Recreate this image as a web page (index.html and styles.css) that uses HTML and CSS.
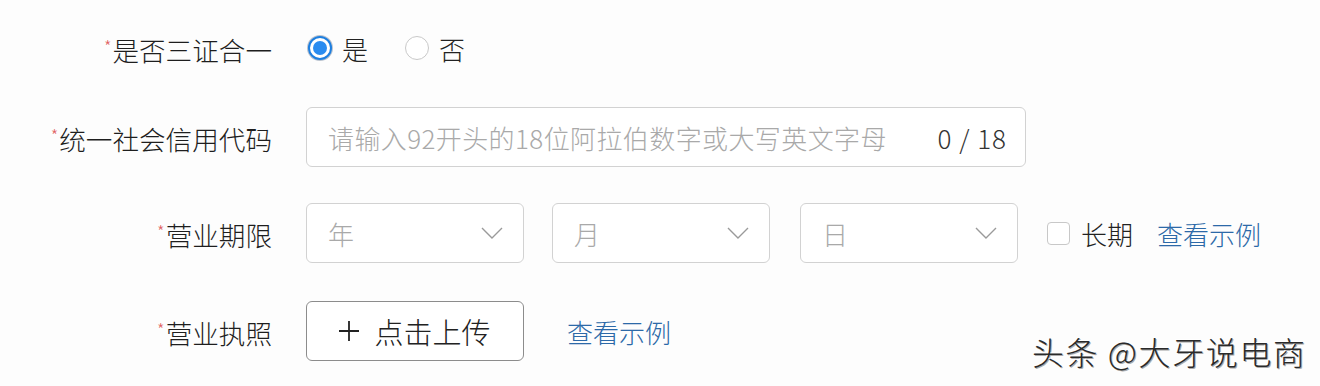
FILE: index.html
```html
<!DOCTYPE html>
<html lang="zh">
<head>
<meta charset="utf-8">
<title>表单</title>
<link rel="stylesheet" href="styles.css">
</head>
<body>
<div class="form">
  <div class="row row-radio">
    <div class="label"><span class="req">*</span>是否三证合一</div>
    <div class="ctrl">
      <label class="radio"><span class="dot checked"></span><span>是</span></label>
      <label class="radio"><span class="dot"></span><span>否</span></label>
    </div>
  </div>
  <div class="row r2">
    <div class="label"><span class="req">*</span>统一社会信用代码</div>
    <div class="ctrl">
      <div class="input">
        <span class="ph">请输入92开头的18位阿拉伯数字或大写英文字母</span>
        <span class="count">0 / 18</span>
      </div>
    </div>
  </div>
  <div class="row r3">
    <div class="label"><span class="req">*</span>营业期限</div>
    <div class="ctrl">
      <div class="select"><span class="ph">年</span><svg class="chev" viewBox="0 0 22 12" width="22" height="12"><path d="M1 1 L11 11 L21 1" fill="none" stroke="#9a9a9a" stroke-width="1.4"/></svg></div>
      <div class="select"><span class="ph">月</span><svg class="chev" viewBox="0 0 22 12" width="22" height="12"><path d="M1 1 L11 11 L21 1" fill="none" stroke="#9a9a9a" stroke-width="1.4"/></svg></div>
      <div class="select"><span class="ph">日</span><svg class="chev" viewBox="0 0 22 12" width="22" height="12"><path d="M1 1 L11 11 L21 1" fill="none" stroke="#9a9a9a" stroke-width="1.4"/></svg></div>
      <label class="check"><span class="box"></span><span>长期</span></label>
      <a class="link link-a">查看示例</a>
    </div>
  </div>
  <div class="row r4">
    <div class="label"><span class="req">*</span>营业执照</div>
    <div class="ctrl">
      <div class="btn"><svg class="plus" viewBox="0 0 20 20" width="20" height="20"><path d="M10 0 V20 M0 10 H20" fill="none" stroke="#222" stroke-width="1.8"/></svg><span>点击上传</span></div>
      <a class="link link-b">查看示例</a>
    </div>
  </div>
</div>
<div class="wm">头条 @大牙说电商</div>
</body>
</html>
```
FILE: styles.css
```css
html, body {
  margin: 0;
  padding: 0;
}
body {
  width: 1320px;
  height: 386px;
  background: #fdfdfd;
  font-family: "Noto Sans CJK SC", "Noto Sans", sans-serif;
  font-weight: 300;
  color: #222;
  position: relative;
  overflow: hidden;
}
.form {
  display: flex;
  flex-direction: column;
  padding-top: 28px;
}
.row {
  display: flex;
  align-items: center;
  height: 60px;
}
.row-radio {
  height: 40px;
}
.r2 { margin-top: 39px; }
.r3 { margin-top: 36px; }
.r4 { margin-top: 38px; }
.label {
  width: 272px;
  text-align: right;
  font-size: 26.6px;
  line-height: 40px;
  color: #1e1e1e;
  white-space: nowrap;
}
.req {
  color: #e06060;
  font-size: 17px;
  vertical-align: 8px;
  margin-right: 1px;
}
.ctrl {
  margin-left: 34px;
  display: flex;
  align-items: center;
  font-size: 26px;
}
.radio {
  display: flex;
  align-items: center;
  gap: 10px;
  margin-left: 2px;
  margin-right: 35px;
}
.dot {
  width: 24px;
  height: 24px;
  border: 1px solid #c9c9c9;
  border-radius: 50%;
  box-sizing: border-box;
  background: #fff;
  position: relative;
}
.dot.checked {
  border: 2px solid #1e7fe0;
  box-shadow: 0 0 0 1px rgba(30, 60, 100, 0.3);
}
.dot.checked::after {
  content: "";
  position: absolute;
  left: 3px;
  top: 3px;
  width: 14px;
  height: 14px;
  border-radius: 50%;
  background: #2a8cf0;
}
.input {
  width: 720px;
  height: 60px;
  box-sizing: border-box;
  border: 1px solid #d2d2d2;
  border-radius: 6px;
  background: #fff;
  display: flex;
  align-items: center;
  justify-content: space-between;
  padding: 0 18px 0 21px;
}
.ph {
  color: #a9a9a9;
  font-size: 26px;
  letter-spacing: 0.4px;
}
.count {
  color: #333;
  font-size: 26px;
  letter-spacing: 1px;
}
.select {
  width: 218px;
  height: 60px;
  box-sizing: border-box;
  border: 1px solid #d2d2d2;
  border-radius: 6px;
  background: #fff;
  display: flex;
  align-items: center;
  justify-content: space-between;
  padding: 0 20px 0 21px;
  margin-right: 28px;
}
.select:nth-child(2) {
  margin-right: 30px;
}
.select:nth-child(3) {
  margin-right: 29px;
}
.chev {
  display: block;
}
.check {
  display: flex;
  align-items: center;
  gap: 11px;
}
.box {
  width: 23px;
  height: 23px;
  box-sizing: border-box;
  border: 1px solid #c8c8c8;
  border-radius: 4px;
  background: #fff;
}
.link {
  color: #2c69a8;
  font-size: 26px;
}
.link-a { margin-left: 24px; }
.link-b { margin-left: 43px; }
.btn {
  width: 218px;
  height: 60px;
  box-sizing: border-box;
  border: 1px solid #8c8c8c;
  border-radius: 6px;
  background: #fff;
  display: flex;
  align-items: center;
  justify-content: center;
  gap: 15px;
  color: #222;
  font-size: 29px;
}
.plus {
  display: block;
}
.wm {
  position: absolute;
  left: 1032px;
  top: 330px;
  font-size: 32px;
  line-height: 42px;
  color: #2a2a2a;
  text-shadow: -1px -1px 0 #fff, 1px 1px 0 #aaa;
  letter-spacing: 1.6px;
  white-space: nowrap;
}
```
